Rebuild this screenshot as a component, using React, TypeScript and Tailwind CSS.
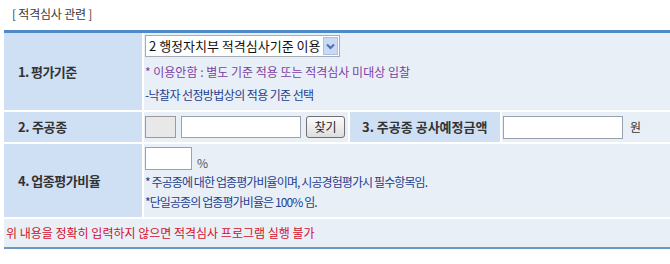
import React from "react";

const font = { fontFamily: '"Noto Sans CJK KR", "Noto Sans", sans-serif' };

export default function App() {
  return (
    <div className="w-[670px] h-[264px] bg-white overflow-hidden text-[12px] text-[#333]" style={font}>
      <div className="h-[30px] pl-[12px] pt-[5px] text-[12px] leading-[18px] text-[#3a3a3a] tracking-[-0.2px]">[ 적격심사 관련 ]</div>
      <div className="ml-[4px] border-t-[3px] border-[#4f89c7] bg-white flex flex-col gap-[2px]">
        {/* Row 1 */}
        <div className="flex gap-[2px] h-[77px]">
          <div className="w-[138px] bg-[#cfe0f4] flex items-center pl-[14px] font-bold text-[13px] tracking-[-0.6px]">1. 평가기준</div>
          <div className="flex-1 bg-[#e9eff7] pl-[1px] pt-[2px] flex flex-col">
            <div className="w-[195px] h-[22px] bg-white border border-[#a5acb5] flex items-center justify-between pl-[3px] pr-[1px] text-[13px] text-[#111]">
              <span>2 행정자치부 적격심사기준 이용</span>
              <span className="w-[15px] h-[18px] bg-[#c9daf5] border border-[#a9c0e8] flex items-center justify-center">
                <svg width="9" height="7" viewBox="0 0 9 7"><path d="M1 1.5 L4.5 5 L8 1.5" stroke="#4d6fb3" strokeWidth="2" fill="none" /></svg>
              </span>
            </div>
            <div className="mt-[6px] leading-[18px] text-[#7b3fa3]">* 이용안함 : 별도 기준 적용 또는 적격심사 미대상 입찰</div>
            <div className="mt-[5px] leading-[18px] text-[#23408e] tracking-[-0.6px]">-낙찰자 선정방법상의 적용 기준 선택</div>
          </div>
        </div>
        {/* Row 2 */}
        <div className="flex gap-[2px] h-[30px]">
          <div className="w-[138px] bg-[#cfe0f4] flex items-center pl-[14px] font-bold text-[13px] tracking-[-0.3px]">2. 주공종</div>
          <div className="w-[204px] bg-[#e9eff7] flex items-center pl-[1px] gap-[5px]">
            <div className="w-[31px] h-[22px] bg-[#e8e8e8] border border-[#9a9a9a]"></div>
            <div className="w-[120px] h-[22px] bg-white border border-[#9aa3ad]"></div>
            <div className="w-[39px] h-[22px] rounded-[3px] border border-[#707070] bg-gradient-to-b from-[#fbfbfb] to-[#dedede] flex items-center justify-center text-[12px] text-[#222]">찾기</div>
          </div>
          <div className="w-[150px] bg-[#cfe0f4] flex items-center pl-[12px] font-bold text-[13px]">3. 주공종 공사예정금액</div>
          <div className="flex-1 bg-[#e9eff7] flex items-center pl-[1px] gap-[7px]">
            <div className="w-[120px] h-[23px] bg-white border border-[#9aa3ad]"></div>
            <span className="text-[12px] text-[#333]">원</span>
          </div>
        </div>
        {/* Row 3 */}
        <div className="flex gap-[2px] h-[73px]">
          <div className="w-[138px] bg-[#cfe0f4] flex items-center pl-[14px] font-bold text-[13px] tracking-[-0.5px]">4. 업종평가비율</div>
          <div className="flex-1 bg-[#e9eff7] pl-[1px] pt-[3px] flex flex-col">
            <div className="flex items-end gap-[5px]">
              <div className="w-[47px] h-[23px] bg-white border border-[#9aa3ad]"></div>
              <span className="text-[#555] leading-[14px]">%</span>
            </div>
            <div className="mt-[3px] leading-[18px] text-[#23408e] tracking-[-0.9px]">* 주공종에 대한 업종평가비율이며, 시공경험평가시 필수항목임.</div>
            <div className="mt-[2px] leading-[18px] text-[#23408e] tracking-[-0.9px]">*단일공종의 업종평가비율은 100% 임.</div>
          </div>
        </div>
        {/* Notice row */}
        <div className="h-[28px] bg-[#e9eff7] flex items-center pl-[2px] text-[12px] text-[#d3102a]">위 내용을 정확히 입력하지 않으면 적격심사 프로그램 실행 불가</div>
      </div>
      <div className="ml-[4px] h-[2px] bg-[#6f97c2]"></div>
    </div>
  );
}
